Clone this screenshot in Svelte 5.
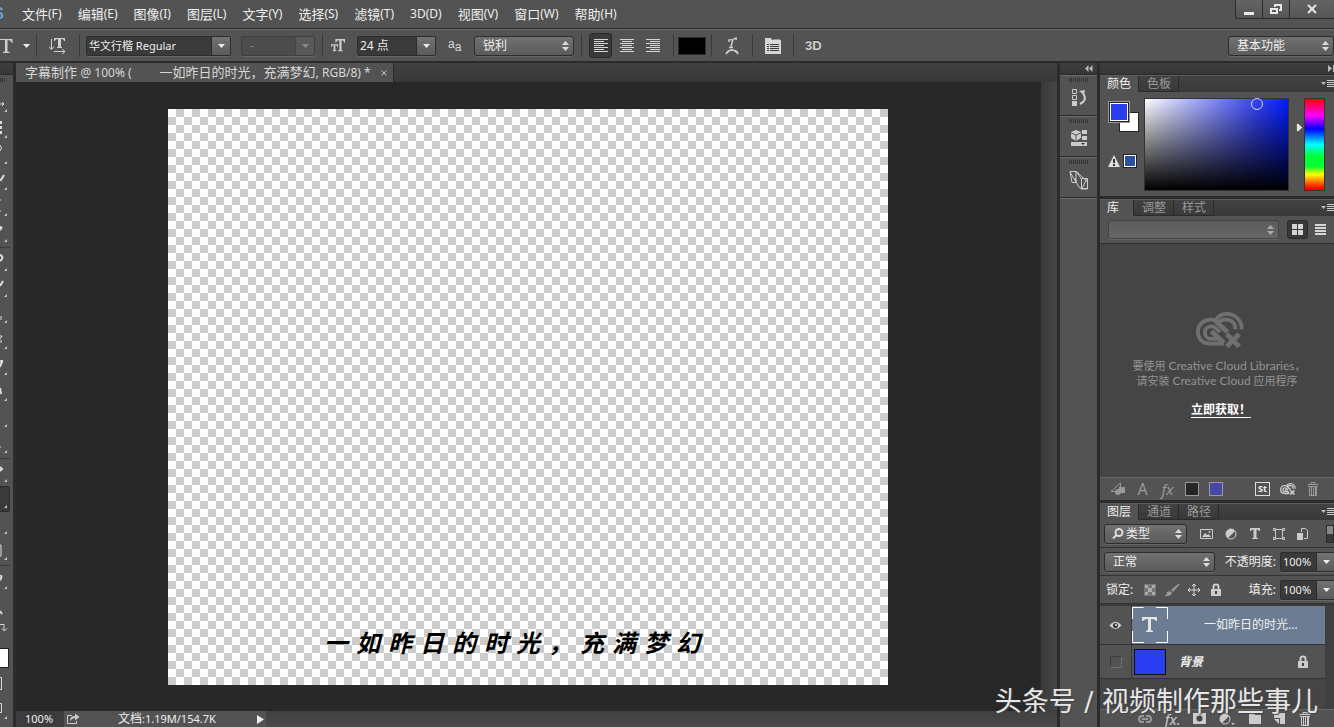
<script>
  const menus = [
    ['文件', '(F)'], ['编辑', '(E)'], ['图像', '(I)'], ['图层', '(L)'], ['文字', '(Y)'], ['选择', '(S)'],
    ['滤镜', '(T)'], ['', '3D(D)'], ['视图', '(V)'], ['窗口', '(W)'], ['帮助', '(H)']
  ];
  const subtitle = '一如昨日的时光，充满梦幻';
  const toolGroups = [
    [
      { name: '移动', d: 'M0 14h3M2 12l2 2-2 2' },
      { name: '选框', d: 'M1 5v3M1 10v3M1 15v3', w: 2 },
      { name: '套索', d: 'M0 3q3 3 0 6' },
      { name: '快速选择', d: 'M0 11l1 1 3-5', w: 2 },
      { name: '裁剪', d: 'M0 6h1M0 17h1' },
      { name: '吸管', d: 'M0 7q3 0 0 3', w: 2 }
    ],
    [
      { name: '修复画笔', d: 'M0 6q5 2 0 6', w: 2 },
      { name: '画笔', d: 'M0 11l3-5', w: 2 },
      { name: '图章', d: 'M1 15v4' },
      { name: '历史画笔', d: 'M0 12l2-3M0 9h2M1 13v3' },
      { name: '橡皮擦', d: 'M0 9q4-3 1 2l-1 3', w: 2 },
      { name: '渐变', d: 'M0 9l1 6', w: 2 },
      { name: '减淡', d: '' },
      { name: '海绵', d: 'M0 16h1' }
    ],
    [
      { name: '钢笔', d: 'M0 7l2 2-2 2', w: 2 },
      { name: '文字', d: '', on: true },
      { name: '路径选择', d: '' },
      { name: '矩形', d: 'M0 7h1v11h-1' }
    ],
    [{ name: '抓手', d: 'M1 8q1 4-1 5', w: 2 }]
  ];
  let align = $state(0);
  let zoom = $state('100%');
  let opacity = $state('100%');
  let fill = $state('100%');
  let family = $state('华文行楷 Regular');
  let size = $state('24 点');
</script>

{#snippet spin()}
  <svg class="spin" width="7" height="10" viewBox="0 0 7 10" aria-hidden="true"><path d="M3.5 0L7 4H0zM3.5 10L0 6h7z" fill="currentColor" /></svg>
{/snippet}
{#snippet caret()}
  <svg width="7" height="4" viewBox="0 0 7 4" aria-hidden="true"><path d="M0 0h7L3.500 4z" fill="currentColor" /></svg>
{/snippet}
{#snippet lines(k)}
  <svg width="16" height="16" viewBox="0 0 16 16" stroke="#d6d6d6" aria-hidden="true">
    {#each [14, 10, 14, 10, 14, 10, 14] as w, i}
      {@const x = k === 0 ? 1 : k === 1 ? (16 - w) / 2 : 15 - w}
      <path d="M{x} {i * 2 + 1.5}h{w}" />
    {/each}
  </svg>
{/snippet}
{#snippet cloud(s)}
  <svg width={s} height={s * 0.8} viewBox="0 0 50 40" fill="none" stroke="currentColor" aria-hidden="true">
    <path d="M29 33H15C7 33 2 28 2 20.500 2 13 8 8 15 8c2 0 4 0 5 1C23 4 27 2 32 2c9 0 16 7 15.500 16" stroke-width="4" />
    <path d="M29 32L16 20M20 9l13 12" stroke-width="5" />
    <path d="M26 28H16c-9 0-9-13 0-13 4 0 6 3 9 6M22 12c6-7 20-5 19 6" stroke-width="4" />
    <path d="M32 23l13 13M45 23L32 36" stroke-width="5" />
  </svg>
{/snippet}
{#snippet trash()}
  <svg width="14" height="14" viewBox="0 0 14 14" fill="none" stroke="currentColor" aria-hidden="true"><path d="M5 2V.5h4V2M1.500 2.500h11M2 4.500h10M3.500 5v8.500h7V5M5.500 5v8M7.500 5v8M9.500 5v8" /></svg>
{/snippet}
{#snippet lock()}
  <svg width="12" height="14" viewBox="0 0 12 14" aria-hidden="true"><path d="M3.500 6V3.500q0-2 2.500-2t2.500 2V6" fill="none" stroke="currentColor" stroke-width="2" /><path d="M1 6h10v7H1z" fill="currentColor" /><path d="M6 8v3" stroke="#444" stroke-width="2" /></svg>
{/snippet}
{#snippet panelMenu()}
  <button class="pm" aria-label="面板菜单"><svg width="13" height="10" viewBox="0 0 13 10"><path d="M0 3h5L2.500 6z" fill="#bbb" /><path d="M6 1.500h7M6 3.500h7M6 5.500h7M6 7.500h7" stroke="#ccc" /></svg></button>
{/snippet}

<div class="app">
  <header class="menubar">
    <span class="logo">S</span>
    <nav>
      {#each menus as [zh, key]}<button>{zh}<span class="en">{key}</span></button>{/each}
    </nav>
    <div class="wincontrols">
      <button aria-label="最小化"><svg width="12" height="12"><path d="M1 9h10v3H1z" fill="#e8e8e8" /></svg></button>
      <button aria-label="还原"><svg width="12" height="12" fill="none" stroke="#e8e8e8" stroke-width="2"><path d="M5 4V2h6v5H9M1 6h6v4H1z" /></svg></button>
      <button class="close" aria-label="关闭"><svg width="10" height="10" stroke="#e8e8e8" stroke-width="2"><path d="M1 1l8 8M9 1L1 9" /></svg></button>
    </div>
  </header>

  <div class="options">
    <div class="grp first">
      <svg width="13" height="14" viewBox="0 0 13 14" fill="#d0d0d0" aria-hidden="true"><path d="M0 0h12.500v4h-.8Q11 1 7.500 1V12.500l2 .5v1H3v-1l2-.5V1H0z" /></svg>
      <button class="plain" aria-label="工具预设">{@render caret()}</button>
    </div>
    <div class="grp wide">
      <button class="plain" aria-label="切换文本取向"><svg width="18" height="18" viewBox="0 0 18 18"><path d="M5 1h11v3h-1q0-2-3-2v8h1v1H8v-1h1V2Q6 2 6 4H5z" fill="#d0d0d0" /><path d="M2.500 2v10M0 9.500l2.500 3 2.500-3M5 14.500h11M13 12l3 2.500-3 2.500" fill="none" stroke="#d0d0d0" /></svg></button>
    </div>
    <div class="grp fonts">
      <div class="combo family"><input aria-label="字体" bind:value={family} /><button aria-label="字体列表">{@render caret()}</button></div>
      <div class="combo style off"><input aria-label="字体样式" value="-" disabled /><button aria-label="样式列表" disabled>{@render caret()}</button></div>
    </div>
    <div class="grp sizes">
      <svg class="tt" width="16" height="15" viewBox="0 0 16 15" fill="#d0d0d0" aria-hidden="true"><path d="M5 0h11v4h-1q0-2.500-3-2.500V13h1.500v1H8v-1h1.500V1.500Q6 1.500 6 4H5z" /><path d="M0 6h8v3H7Q7 7 5 7v6h1v1H2v-1h1V7Q1 7 1 9H0z" /></svg>
      <div class="combo size"><input aria-label="字号" bind:value={size} /><button aria-label="字号列表">{@render caret()}</button></div>
      <span class="aa" aria-hidden="true"><span>a</span><b>a</b></span>
      <div class="sel aliasing"><select aria-label="消除锯齿"><option>锐利</option></select>{@render spin()}</div>
    </div>
    <div class="grp aligns">
      {#each ['左对齐', '居中', '右对齐'] as name, i}
        <button class:on={align === i} aria-label={name} onclick={() => (align = i)}>{@render lines(i)}</button>
      {/each}
    </div>
    <div class="grp colour"><button class="black" aria-label="文本颜色"></button></div>
    <div class="grp wide">
      <button class="plain" aria-label="变形文字"><svg width="14" height="18" viewBox="0 0 14 18" fill="none" stroke="#cfcfcf"><path d="M4 5V3q4 0 7-2v2M8 2L6 10M4 10.500h4" stroke-width="1.500" /><path d="M1 17q1-3 5-4 5 0 7 3M1 17q3-4 6-4t6 4" stroke-width="1.500" /></svg></button>
    </div>
    <div class="grp wide">
      <button class="plain" aria-label="字符和段落面板"><svg width="16" height="16" viewBox="0 0 16 16"><path d="M0 0h6l1 2h9v14H0z" fill="#d6d6d6" /><path d="M8 1.500h7" stroke="#999" /><path d="M2 6.500h2M5 6.500h9M2 8.500h2M5 8.500h9M2 10.500h2M5 10.500h9M2 12.500h2M5 12.500h9" stroke="#3a3a3a" /></svg></button>
    </div>
    <div class="grp last"><button class="three">3D</button></div>
    <div class="sel space"><select aria-label="工作区"><option>基本功能</option></select>{@render spin()}</div>
  </div>

  <div class="work">
    <aside class="tools">
      <div class="strip"></div>
      <div class="grip"></div>
      {#each toolGroups as group}
        <div class="toolgroup">
          {#each group as t}
            <button class:on={t.on} aria-label={t.name}>
              <svg width="13" height="26"><path d={t.d} fill="none" stroke="#ddd" stroke-width={t.w ?? 1} /><path d="M7 19v3H4z" fill="#c4c4c4" /></svg>
            </button>
          {/each}
        </div>
      {/each}
      <svg width="13" height="134" fill="none" stroke="#d8d8d8" aria-hidden="true">
        <path d="M0 15l2 3" stroke-width="2" />
        <path d="M0 28.500h4v6M2 32.500l2.500 2.500L7 32.500" />
        <path d="M0 52.500h8.500v19H0" fill="#fff" stroke="#222" />
        <path d="M0 81.500h1.500v12H0M0 107.500h1.500v9H0" />
        <path d="M7 120v3H4z" fill="#c4c4c4" stroke="none" />
      </svg>
    </aside>

    <main class="doc">
      <div class="tabs">
        <div class="doctab">
          <span>字幕制作 <span class="en">@ 100% (</span></span>
          <span>一如昨日的时光，充满梦幻<span class="en">, RGB/8) *</span></span>
          <button aria-label="关闭文档"><svg width="6" height="6" stroke="#c8c8c8"><path d="M.5.5l5 5M5.500.5l-5 5" /></svg></button>
        </div>
      </div>
      <div class="stage">
        <div class="pasteboard">
          <div class="canvas">
            <p>{#each subtitle as ch}<span>{ch}</span>{/each}</p>
          </div>
        </div>
        <div class="scroll"></div>
      </div>
      <footer class="status">
        <input aria-label="缩放" bind:value={zoom} />
        <div class="info">
          <button class="plain" aria-label="共享"><svg width="14" height="12" viewBox="0 0 14 12"><path d="M6 2.500H1.500v8h9V8" fill="none" stroke="#ccc" /><path d="M4 8q0-5 5-5V.5L13.500 4 9 7.500V5Q6 5 4 8z" fill="#ccc" /></svg></button>
          <span>文档<span class="en">:1.19M/154.7K</span></span>
          <button class="plain play" aria-label="状态选项"><svg width="7" height="9"><path d="M0 0l7 4.500L0 9z" fill="#eee" /></svg></button>
        </div>
      </footer>
    </main>

    <aside class="dock">
      <div class="strip"><svg width="8" height="7" fill="#bbb"><path d="M3.500 0v7L0 3.500zM7.500 0v7L4 3.500z" /></svg></div>
      <button aria-label="历史记录"><i></i><svg width="18" height="20" viewBox="0 0 18 20" fill="none" stroke="#ccc"><path d="M2.500 1.500h4v4h-4zM2.500 7.500h4v4h-4z" /><path d="M2 13h5v5H2z" fill="#ccc" stroke="none" /><path d="M10 16q8-4 3-11" stroke-width="2" /><path d="M9 3l6-1-1 5z" fill="#ccc" stroke="none" /></svg></button>
      <button aria-label="属性"><i></i><svg width="18" height="20" viewBox="0 0 18 20"><path d="M6 1l5 2v6l-5 3-5-3V3z" fill="#ccc" /><path d="M1 4l5 2 5-2M6 6v6" fill="none" stroke="#555" /><path d="M12 1h5v4h-5zM12 7h5v4h-5zM1 13h16v4H1z" fill="#ccc" /><path d="M11 14h4l-2 2z" fill="#333" /></svg></button>
      <button aria-label="样式源"><i></i><svg width="22" height="20" viewBox="0 0 22 20" fill="none" stroke="#ccc"><path d="M2 1.500h6.500L19.500 12v7h-6L10 16 7 8M2 1.500l2 11h4V1.500M2 2l6 10M13.500 8.500h6v10h-6zM19 9l-5 9M8.500 2l5 7" /></svg></button>
      <div class="end"></div>
    </aside>

    <aside class="panels">
      <div class="strip"><svg width="6" height="7" fill="#bbb"><path d="M0 0l4 3.500L0 7zM5 0h1v7H5z" /></svg></div>

      <section>
        <div class="ptabs"><button class="on">颜色</button><button>色板</button>{@render panelMenu()}</div>
        <div class="colourbody">
          <div class="swatches">
            <div class="pair"><button class="bg" aria-label="背景色"></button><button class="fg" aria-label="前景色"></button></div>
            <div class="warn">
              <svg width="12" height="12"><path d="M6 0l6 12H0z" fill="#e0e0e0" /><path d="M6 4v4M6 9v2" stroke="#333" stroke-width="2" /></svg>
              <button aria-label="色域内颜色"></button>
            </div>
          </div>
          <div class="field"><i></i></div>
          <svg class="huemark" width="7" height="9"><path d="M.5.5h2L6.500 4.500l-4 4h-2z" fill="#e4e4e4" stroke="#333" stroke-width=".5" /></svg>
          <div class="hue"></div>
        </div>
      </section>

      <section class="library">
        <div class="ptabs"><button class="on solo">库</button><button>调整</button><button>样式</button>{@render panelMenu()}</div>
        <div class="libbar">
          <div class="sel lib"><select aria-label="库" disabled><option></option></select>{@render spin()}</div>
          <button class="view on" aria-label="网格视图"><svg width="12" height="12" fill="#d6d6d6"><path d="M0 0h5v5H0zM6 0h5v5H6zM0 6h5v5H0zM6 6h5v5H6z" /></svg></button>
          <button class="view" aria-label="列表视图"><svg width="12" height="12" fill="#d6d6d6"><path d="M0 0h11v2H0zM0 3h11v2H0zM0 6h11v2H0zM0 9h11v2H0z" /></svg></button>
        </div>
        <div class="libbody">
          {@render cloud(48)}
          <p><span>要使用 <span class="lat">Creative Cloud Libraries</span>，</span><span class="second">请安装 <span class="lat">Creative Cloud</span> 应用程序</span></p>
          <a href="#get">立即获取！</a>
        </div>
        <div class="libfoot">
          <button class="dim" aria-label="添加图形"><svg width="15" height="14" viewBox="0 0 15 14" fill="none" stroke="currentColor"><path d="M1 9.500L10.500 1v8.500z" /><path d="M9 5h6v6H9z" fill="currentColor" stroke="none" /><circle cx="8" cy="10" r="3" fill="currentColor" stroke="none" /></svg></button>
          <button class="dim letter">A</button>
          <button class="dim letter fx">fx</button>
          <button class="chip dark" aria-label="添加文本颜色"></button>
          <button class="chip blue" aria-label="添加前景色"></button>
          <button class="st">St</button>
          <button class="cc" aria-label="库同步">{@render cloud(16)}</button>
          <button class="dim" aria-label="删除库项目">{@render trash()}</button>
        </div>
      </section>

      <section class="layers">
        <div class="ptabs"><button class="on">图层</button><button>通道</button><button>路径</button>{@render panelMenu()}</div>
        <div class="row">
          <div class="sel kind"><svg class="mag" width="12" height="12" fill="none" stroke="#ddd" stroke-width="2"><circle cx="7" cy="4.500" r="3.500" /><path d="M4.500 7L1 10.500" /></svg><select aria-label="筛选类型"><option>类型</option></select>{@render spin()}</div>
          <div class="filters">
            <button aria-label="像素图层"><svg width="14" height="12"><path d="M.5 1.500h12v9H.5z" fill="none" stroke="#ccc" /><path d="M2 9l3-4 2 2 1.500-1L11 9z" fill="#ccc" /><circle cx="9.500" cy="4" r="1" fill="#ccc" /></svg></button>
            <button aria-label="调整图层"><svg width="12" height="12"><circle cx="6" cy="6" r="5" fill="#ccc" /><path d="M3 10a5 5 0 0 0 7-7z" fill="#555" /><circle cx="6" cy="6" r="5" fill="none" stroke="#ccc" /></svg></button>
            <button aria-label="文字图层"><svg width="12" height="12" fill="#ccc"><path d="M1 0h10v3h-1q0-1.500-2.500-1.500V10H9v1H3v-1h1.500V1.500Q2 1.500 2 3H1z" /></svg></button>
            <button aria-label="形状图层"><svg width="12" height="12" fill="none" stroke="#ccc"><path d="M.5.5h2v2h-2zM9.500.5h2v2h-2zM.5 9.500h2v2h-2zM9.500 9.500h2v2h-2zM3 1.500h6M3 10.500h6M2.500 3v6M9.500 3v6" /></svg></button>
            <button aria-label="智能对象"><svg width="12" height="12"><path d="M4.500 4V.5h4l2 2v8H7" fill="none" stroke="#ccc" /><path d="M0 5h6v7H0z" fill="#ccc" /></svg></button>
          </div>
          <button class="toggle" aria-label="打开筛选"></button>
        </div>
        <div class="row">
          <div class="sel blend"><select aria-label="混合模式"><option>正常</option></select>{@render spin()}</div>
          <label for="opacity">不透明度:</label>
          <div class="combo pct"><input id="opacity" bind:value={opacity} /><button aria-label="调整不透明度">{@render caret()}</button></div>
        </div>
        <div class="row">
          <span class="lk">锁定:</span>
          <div class="locks">
            <button aria-label="锁定透明像素"><svg width="12" height="12"><path d="M0 0h12v12H0z" fill="#777" /><path d="M1 1h3v3H1zM8 1h3v3H8zM4 4h4v4H4zM1 8h3v3H1zM8 8h3v3H8z" fill="#aaa" /></svg></button>
            <button aria-label="锁定图像像素"><svg width="16" height="14"><path d="M0 13q3-1 3-4l3-1 2 2q-2 4-8 3zM7 7l7-6h2L9 9z" fill="#999" /></svg></button>
            <button aria-label="锁定位置"><svg width="14" height="14" fill="none" stroke="#ddd"><path d="M7 1v12M1 7h12M5 3l2-2 2 2M5 11l2 2 2-2M3 5L1 7l2 2M11 5l2 2-2 2" /></svg></button>
            <button class="grey" aria-label="锁定全部">{@render lock()}</button>
          </div>
          <label for="fill">填充:</label>
          <div class="combo pct"><input id="fill" bind:value={fill} /><button aria-label="调整填充">{@render caret()}</button></div>
        </div>
        <div class="list">
          <ul>
            <li class="picked">
              <button class="eye" aria-label="隐藏图层"><svg width="13" height="9"><path d="M.5 4.500q6-7.500 12 0-6 7-12 0z" fill="#ccc" /><circle cx="6.500" cy="4.500" r="2.500" fill="#333" /><circle cx="7" cy="4" r="1" fill="#eee" /></svg></button>
              <div class="body">
                <svg width="36" height="36"><path d="M.5 12V.5h11M24 .5h11.500V12M35.500 24v11.500H24M12 35.500H.5V24" fill="none" stroke="#fff" /><path d="M10 10h15v4h-1q-1-2-5-2v11l2 1v1h-7v-1l2-1V12q-4 0-5 2h-1z" fill="#e4e4e4" /></svg>
                <span class="lname text">一如昨日的时光...</span>
              </div>
            </li>
            <li>
              <button class="eye" aria-label="显示图层"><i></i></button>
              <div class="body">
                <span class="thumb"></span>
                <em class="lname">背景</em>
                <span class="locked">{@render lock()}</span>
              </div>
            </li>
          </ul>
          <div class="lscroll"></div>
        </div>
        <div class="layfoot">
          <button class="dim" aria-label="链接图层"><svg width="14" height="8" fill="none" stroke="currentColor" stroke-width="2"><path d="M6 1H4Q1 1 1 4t3 3h2M8 1h2q3 0 3 3t-3 3H8M4 4h6" /></svg></button>
          <button class="letter fx">fx.</button>
          <button aria-label="添加蒙版"><svg width="13" height="11"><path d="M0 0h13v11H0z" fill="#ccc" /><circle cx="6.500" cy="5.500" r="3" fill="#444" /></svg></button>
          <button aria-label="新建调整图层"><svg width="16" height="12"><circle cx="6" cy="6" r="5" fill="#ccc" /><path d="M3 10a5 5 0 0 0 7-7z" fill="#555" /><circle cx="6" cy="6" r="5" fill="none" stroke="#ccc" /><path d="M12 10h4l-2 2z" fill="#ccc" /></svg></button>
          <button aria-label="新建组"><svg width="12" height="11"><path d="M0 0h5l1 2h6v9H0z" fill="#ccc" /></svg></button>
          <button aria-label="新建图层"><svg width="11" height="11"><path d="M0 0h11v11H6V5H0z" fill="#ccc" /><path d="M0 6l5 5V6z" fill="#ccc" /></svg></button>
          <button aria-label="删除图层">{@render trash()}</button>
        </div>
      </section>
    </aside>
  </div>
  <div class="watermark">头条号 / 视频制作那些事儿</div>
</div>

<style>
  :global(body) { margin: 0; background: #535353; }
  .app {
    position: relative; display: flex; flex-direction: column; height: 100vh; min-height: 700px; overflow: hidden;
    background: #535353; color: #eee; font: 12px/16px "Noto Sans", "Noto Sans CJK SC", sans-serif;
  }
  .app :is(div, header, nav, aside, main, section, footer, button, input, select, i, ul, li, p, span) { box-sizing: border-box; }
  button, input, select { font: inherit; color: inherit; margin: 0; padding: 0; border: 0; background: none; border-radius: 0; }
  button { display: flex; align-items: center; justify-content: center; flex: none; white-space: nowrap; }
  input { min-width: 0; outline: 0; }
  svg { display: block; flex: none; }
  .en { font-size: 11px; }
  p, ul { margin: 0; padding: 0; list-style: none; }

  .menubar { display: flex; height: 29px; flex: none; border-bottom: 1px solid #2b2b2b; font-size: 13px; }
  .menubar .en { font-size: 12px; }
  .logo { width: 4px; overflow: hidden; direction: rtl; color: #6fa0cc; font: bold 16px/28px "Liberation Sans", sans-serif; }
  nav { display: flex; flex: 1; gap: 16px; padding-left: 18px; }
  nav button { height: 27px; }
  .wincontrols { display: flex; height: 19px; border: 1px solid #2b2b2b; border-top: 0; border-right: 0; border-radius: 0 0 0 3px; background: linear-gradient(#646464, #555); }
  .wincontrols button { width: 27px; border-right: 1px solid #2b2b2b; }
  .wincontrols .close { width: 44px; border: 0; }

  .options { display: flex; align-items: center; height: 33px; flex: none; border-top: 1px solid #6a6a6a; border-bottom: 1px solid #2b2b2b; }
  .grp { display: flex; align-items: center; height: 23px; border-left: 1px solid #3a3a3a; }
  .grp.first { border: 0; width: 36px; gap: 10px; }
  .grp.wide { width: 43px; justify-content: center; }
  .grp.wide ~ .grp.wide { width: 41px; }
  .grp.fonts { padding: 0 7px 0 6px; gap: 10px; }
  .grp.sizes { padding: 0 7px 0 8px; gap: 12px; }
  .grp.aligns { padding: 0 9px 0 7px; gap: 3px; }
  .grp.colour { padding: 0 5px 0 4px; }
  .grp.last { padding-left: 11px; }
  .aligns button { width: 23px; height: 25px; border-radius: 3px; }
  .aligns .on { background: #3a3a3a; border: 1px solid #292929; }
  .black { width: 28px; height: 18px; background: #000; border: 1px solid #2c2c2c; }
  .three { font: bold 13px/18px "Liberation Sans", sans-serif; color: #cfcfcf; text-shadow: 0 -1px #333; }
  .aa { display: flex; width: 14px; color: #d8d8d8; font: 12px/16px "Liberation Sans", sans-serif; }
  .aa b { padding-top: 3px; font-weight: 400; }
  .tt { width: 14px; }

  .combo { display: flex; height: 20px; border: 1px solid #2d2d2d; border-radius: 2px; background: #3a3a3a; box-shadow: 0 1px #666; }
  .combo input { flex: 1; width: 20px; padding-left: 2px; font-size: 12px; }
  .combo button { width: 19px; border-left: 1px solid #2d2d2d; background: linear-gradient(#727272, #5a5a5a); }
  .combo.family { width: 145px; }
  .combo.style { width: 74px; }
  .combo.size { width: 79px; }
  .combo.off { border-color: #3f3f3f; background: #4c4c4c; color: #888; }
  .combo.off input { padding-left: 8px; }
  .combo.off button { background: #595959; border-color: #444; }
  .combo.pct { width: 56px; margin-right: -2px; }
  .combo.family input, .combo.pct input { font-size: 11px; }

  .sel { display: grid; align-items: center; height: 20px; border: 1px solid #2d2d2d; border-radius: 3px; background: linear-gradient(#717171, #5b5b5b); box-shadow: 0 1px #666; }
  .sel > * { grid-area: 1 / 1; }
  .sel select { appearance: none; width: 100%; height: 18px; padding: 0 16px 0 8px; outline: 0; font-size: 12px; }
  .sel option { background: #535353; }
  .sel .spin { justify-self: end; margin-right: 4px; pointer-events: none; color: #ddd; }
  .aliasing { width: 100px; }
  .space { width: 106px; margin-left: auto; }
  .sel.lib { flex: 1; height: 19px; margin-right: 6px; border-color: #444; background: linear-gradient(#5c5c5c, #666); }
  .sel.lib .spin { color: #aaa; }
  .kind { width: 83px; }
  .sel.kind select { padding-left: 21px; }
  .mag { margin-left: 7px; }
  .blend { width: 111px; }

  .work { display: flex; flex: 1; min-height: 0; background: #2b2b2b; gap: 3px; padding-top: 1px; }
  .strip { display: flex; align-items: center; justify-content: flex-end; height: 12px; flex: none; background: linear-gradient(#3e3e3e, #363636); border-bottom: 1px solid #2b2b2b; }
  .tools { display: flex; flex-direction: column; width: 13px; flex: none; background: #535353; overflow: hidden; }
  .grip { width: 5px; height: 4px; flex: none; margin: 3px 0 8px; background: repeating-linear-gradient(90deg, #333 0 1px, transparent 1px 2px); }
  .toolgroup { flex: none; padding-bottom: 1px; margin-bottom: 1px; border-bottom: 1px solid #3a3a3a; width: 10px; }
  .toolgroup button { width: 10px; height: 26px; justify-content: flex-start; overflow: hidden; }
  .toolgroup .on { background: #3a3a3a; border: 1px solid #2b2b2b; border-left: 0; border-radius: 0 3px 3px 0; }
  .toolgroup:last-of-type { border-color: transparent; }

  .doc { display: flex; flex-direction: column; flex: 1; min-width: 0; }
  .tabs { display: flex; height: 19px; flex: none; background: linear-gradient(#414141, #383838); }
  .doctab { display: flex; align-items: center; gap: 28px; padding: 0 6px 0 9px; background: #535353; border-right: 1px solid #2b2b2b; font-size: 13px; line-height: 18px; color: #d8d8d8; white-space: nowrap; }
  .doctab .en { font-size: 12px; }
  .doctab button { margin-left: -18px; }
  .stage { display: flex; flex: 1; min-height: 0; background: #282828; }
  .pasteboard { display: flex; flex: 1; min-width: 0; align-items: center; justify-content: center; padding-right: 1px; overflow: hidden; }
  .canvas { display: flex; align-items: flex-end; justify-content: center; flex: none; width: 720px; height: 576px; padding-bottom: 28px; background: repeating-conic-gradient(#ccc 0 25%, #fff 0 50%) 0 0 / 16px 16px; }
  .canvas p { display: flex; gap: 8px; padding-right: 32px; color: #000; font: italic 700 24px/30px "Noto Sans CJK SC", sans-serif; }
  .scroll { width: 16px; background: linear-gradient(90deg, #3a3a3a, #464646); }
  .status { display: flex; height: 16px; flex: none; background: linear-gradient(#404040, #4a4a4a); }
  .status input { width: 48px; padding-left: 9px; background: #3c3c3c; font-size: 11px; }
  .info { display: flex; align-items: center; width: 202px; padding: 0 2px; background: #535353; }
  .info span { white-space: nowrap; }
  .info > span { margin-left: 38px; }
  .info .play { margin-left: auto; }

  .dock { display: flex; flex-direction: column; width: 37px; flex: none; }
  .dock .strip { padding-right: 4px; }
  .dock button { flex-direction: column; justify-content: flex-start; gap: 6px; height: 41px; padding-top: 2px; background: #535353; border-top: 1px solid #6a6a6a; border-bottom: 1px solid #2b2b2b; }
  .dock i { width: 19px; height: 4px; background: repeating-linear-gradient(90deg, #333 0 1px, transparent 1px 2px); }
  .dock .end { flex: 1; background: #535353; border-top: 1px solid #6a6a6a; }

  .panels { display: flex; flex-direction: column; width: 234px; flex: none; overflow: hidden; }
  section { display: flex; flex-direction: column; flex: none; margin-bottom: 3px; background: #535353; }
  .ptabs { display: flex; height: 17px; flex: none; background: linear-gradient(#424242, #393939); border-top: 1px solid #5c5c5c; }
  .ptabs button { padding: 0 7px 0 8px; border-right: 1px solid #2b2b2b; border-bottom: 1px solid #2b2b2b; color: #999; line-height: 16px; }
  .ptabs .on { padding-left: 7px; background: #535353; border-bottom-color: #535353; color: #eee; }
  .ptabs .solo { padding-right: 14px; }
  .ptabs .pm { margin-left: auto; padding: 0; border: 0; }

  .colourbody { display: flex; padding: 6px 9px 5px 8px; height: 104px; }
  .swatches { width: 36px; }
  .pair { display: grid; width: 31px; height: 31px; margin-top: 3px; }
  .pair button { grid-area: 1 / 1; width: 20px; height: 20px; }
  .pair .bg { align-self: end; justify-self: end; background: #fff; border: 1px solid #222; }
  .pair .fg { width: 22px; height: 22px; background: #2b3df0; border: 1px solid #999; box-shadow: inset 0 0 0 1px #222, inset 0 0 0 2px #fff; }
  .warn { display: flex; align-items: center; gap: 3px; margin-top: 22px; }
  .warn button { width: 14px; height: 14px; border: 1px solid #222; background: #28509c; box-shadow: inset 0 0 0 1px #fff; }
  .field { flex: 1; height: 93px; border: 1px solid #333; background: linear-gradient(transparent, #000), linear-gradient(90deg, #fff, #3543f5 78%, #001cff); }
  .field i { display: block; width: 12px; height: 12px; border: 1px solid #d4d6ff; border-radius: 50%; margin: -1px 0 0 74%; }
  .huemark { margin: 25px 1px 0 7px; }
  .hue { width: 21px; height: 93px; border: 1px solid #333; background: linear-gradient(red, #f0f 18%, #00f 33%, #0ff 50%, #0f3 63% 74%, #ff0 83%, red 98%); }

  .library { flex: 1; min-height: 0; }
  .libbar { display: flex; align-items: center; gap: 2px; height: 28px; flex: none; padding: 0 3px 0 8px; border-bottom: 1px solid #2f2f2f; }
  .view { width: 21px; height: 19px; border-radius: 3px; }
  .view.on { background: #383838; border: 1px solid #2b2b2b; }
  .libbody { display: flex; flex-direction: column; align-items: center; flex: 1; padding-top: 68px; background: #454545; color: #707070; }
  .libbody p { display: flex; flex-direction: column; padding: 8px 0 0 4px; color: #939393; font-size: 11px; line-height: 15px; white-space: nowrap; }
  .libbody .lat { font: 12px/15px Lato, sans-serif; }
  .libbody .second { padding-left: 4px; }
  .libbody a { margin-top: 14px; padding-left: 8px; color: #fff; font-weight: 700; text-underline-offset: 3px; }
  .libbody > svg { margin-left: 6px; }
  .libfoot { display: flex; align-items: center; gap: 10px; height: 23px; flex: none; padding: 0 14px 0 10px; border-top: 1px solid #666; }
  .dim { color: #999; }
  .letter { width: 15px; font: 16px/16px "Noto Sans", sans-serif; }
  .fx { font: italic 15px/16px "Noto Sans", sans-serif; }
  .chip { width: 14px; height: 14px; border: 1px solid #999; }
  .dark { background: #262626; }
  .blue { background: #4548a8; }
  .st { width: 15px; height: 14px; margin-left: auto; border: 1px solid #ddd; font: bold 9px/12px "Noto Sans", sans-serif; }
  .cc { color: #ccc; }

  .layers { margin: 0; }
  .row { display: flex; align-items: center; height: 28px; padding-left: 4px; border-bottom: 1px solid #343434; white-space: nowrap; }
  .row label { margin: 0 4px 0 auto; }
  .filters { display: flex; gap: 12px; padding-left: 14px; }
  .filters button, .locks button { width: 12px; }
  .locks .grey { color: #ccc; }
  .toggle { width: 8px; height: 18px; margin-left: auto; border: 1px solid #2b2b2b; background: linear-gradient(#888 50%, #3a3a3a 50%); }
  .lk { padding-left: 2px; }
  .locks { display: flex; gap: 10px; padding-left: 11px; }
  .list { display: flex; height: 105px; border-top: 2px solid #3a3a3a; background: #454545; }
  ul { flex: 1; }
  .lscroll { width: 9px; background: #404040; }
  li { display: flex; height: 34px; background: #535353; border-bottom: 1px solid #333; }
  li.picked { height: 39px; }
  .eye { width: 32px; border-right: 1px solid #3a3a3a; }
  .eye i { width: 12px; height: 12px; border: 1px solid #3c3c3c; border-right-color: #707070; border-bottom-color: #707070; }
  .body { display: flex; flex: 1; align-items: center; }
  .picked .body { background: #6c7d93; }
  .thumb { width: 32px; height: 26px; margin-left: 2px; border: 1px solid #111; background: #2b3df0; }
  .lname { margin-left: 13px; white-space: nowrap; }
  .lname.text { margin-left: 36px; }
  em { font-weight: 700; }
  .locked { margin: 0 16px 0 auto; color: #ccc; }
  .layfoot { display: flex; align-items: center; justify-content: space-between; height: 18px; padding: 0 22px 0 38px; border-top: 1px solid #666; color: #ccc; }
  .watermark { position: absolute; right: 16px; bottom: 8px; color: #e6e6e6; font: 27px/34px "DejaVu Sans", "Noto Sans CJK SC", sans-serif; text-shadow: 1px 1px 1px #444; white-space: nowrap; pointer-events: none; }
</style>
